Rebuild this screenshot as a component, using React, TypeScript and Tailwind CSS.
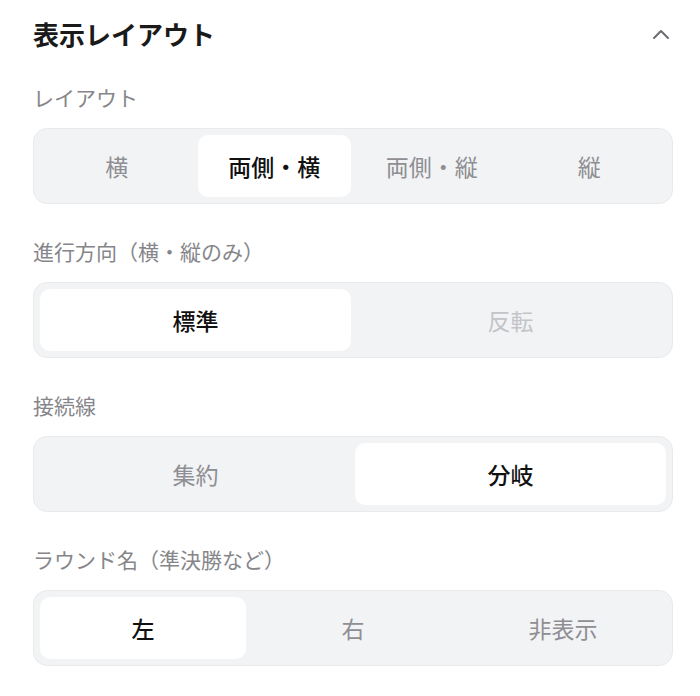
import React, { useState } from "react";

type Option = { label: string; disabled?: boolean };

type SegmentProps = {
  options: Option[];
  value: number;
  onChange: (i: number) => void;
};

function Segmented({ options, value, onChange }: SegmentProps) {
  const cols =
    options.length === 4
      ? "grid-cols-4"
      : options.length === 3
        ? "grid-cols-3"
        : "grid-cols-2";
  return (
    <div
      className={`grid ${cols} gap-1 rounded-[14px] border border-[#e9eaec] bg-[#f2f3f5] p-[6px]`}
    >
      {options.map((opt, i) => {
        const active = i === value;
        return (
          <button
            key={opt.label}
            type="button"
            disabled={opt.disabled}
            onClick={() => onChange(i)}
            className={
              active
                ? "h-[62px] rounded-[10px] bg-white text-[23px] font-medium text-[#111111]"
                : opt.disabled
                  ? "h-[62px] rounded-[10px] text-[23px] text-[#c4c4c8]"
                  : "h-[62px] rounded-[10px] text-[23px] text-[#8e8e93]"
            }
          >
            {opt.label}
          </button>
        );
      })}
    </div>
  );
}

function Section({
  title,
  children,
}: {
  title: string;
  children: React.ReactNode;
}) {
  return (
    <div className="flex flex-col gap-[17px]">
      <div className="text-[21px] leading-[28px] text-[#86868a]">{title}</div>
      {children}
    </div>
  );
}

export default function App() {
  const [layout, setLayout] = useState(1);
  const [direction, setDirection] = useState(0);
  const [line, setLine] = useState(1);
  const [round, setRound] = useState(0);

  return (
    <div
      className="min-h-[696px] bg-white pl-[33px] pr-[27px] pt-[17px]"
      style={{ fontFamily: '"Noto Sans CJK JP", "Noto Sans", sans-serif' }}
    >
      <div className="mb-[33px] flex items-center justify-between">
        <h2 className="text-[26px] font-bold leading-[33px] text-[#1a1a1a]">
          表示レイアウト
        </h2>
        <svg
          width="18"
          height="18"
          viewBox="0 0 18 18"
          fill="none"
          stroke="#6b6b70"
          strokeWidth="2"
          strokeLinecap="round"
          strokeLinejoin="round"
          className="mr-[3px]"
        >
          <path d="M2 13 9 6l7 7" />
        </svg>
      </div>

      <div className="flex flex-col gap-[33px]">
        <Section title="レイアウト">
          <Segmented
            options={[
              { label: "横" },
              { label: "両側・横" },
              { label: "両側・縦" },
              { label: "縦" },
            ]}
            value={layout}
            onChange={setLayout}
          />
        </Section>
        <Section title="進行方向（横・縦のみ）">
          <Segmented
            options={[{ label: "標準" }, { label: "反転", disabled: true }]}
            value={direction}
            onChange={setDirection}
          />
        </Section>
        <Section title="接続線">
          <Segmented
            options={[{ label: "集約" }, { label: "分岐" }]}
            value={line}
            onChange={setLine}
          />
        </Section>
        <Section title="ラウンド名（準決勝など）">
          <Segmented
            options={[{ label: "左" }, { label: "右" }, { label: "非表示" }]}
            value={round}
            onChange={setRound}
          />
        </Section>
      </div>
    </div>
  );
}
